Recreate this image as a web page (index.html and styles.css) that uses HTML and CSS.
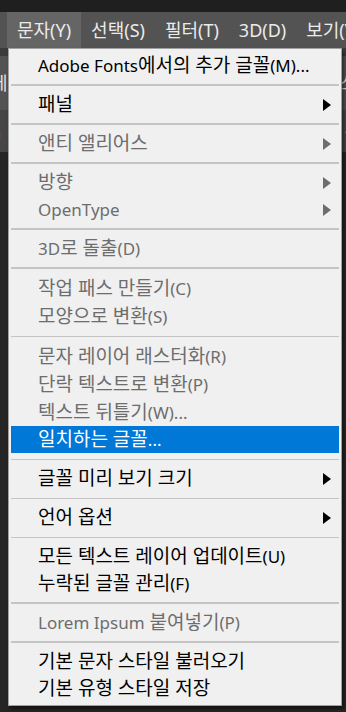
FILE: index.html
```html
<!DOCTYPE html>
<html>
<head>
<meta charset="UTF-8">
<title>문자 메뉴</title>
<link rel="stylesheet" href="styles.css">
</head>
<body>
<div class="top_strip"></div>
<div class="menubar">
	<span class="mb_item active">문자(Y)</span>
	<span class="mb_item">선택(S)</span>
	<span class="mb_item">필터(T)</span>
	<span class="mb_item">3D(D)</span>
	<span class="mb_item">보기(V)</span>
</div>
<div class="work">
	<div class="gap_row"></div>
	<div class="opt_bar">
		<span class="cut_left">데</span>
		<span class="cut_right">스</span>
	</div>
	<div class="tab_bar">
		<span class="cut_left">a</span>
		<span class="cut_right">^</span>
	</div>
</div>

<div class="menu">
	<div class="item"><span><i>Adobe Fonts</i>에서의 추가 글꼴<i>(M)...</i></span></div>
	<div class="sep"></div>
	<div class="item"><span>패널</span><b class="arrow"></b></div>
	<div class="sep"></div>
	<div class="item off"><span>앤티 앨리어스</span><b class="arrow"></b></div>
	<div class="sep"></div>
	<div class="item off"><span>방향</span><b class="arrow"></b></div>
	<div class="item off"><span><i>OpenType</i></span><b class="arrow"></b></div>
	<div class="sep"></div>
	<div class="item off"><span><i>3D</i>로 돌출<i>(D)</i></span></div>
	<div class="sep"></div>
	<div class="item off tall"><span>작업 패스 만들기<i>(C)</i></span></div>
	<div class="item off tall"><span>모양으로 변환<i>(S)</i></span></div>
	<div class="sep thin"></div>
	<div class="item off tall"><span>문자 레이어 래스터화<i>(R)</i></span></div>
	<div class="item off tall"><span>단락 텍스트로 변환<i>(P)</i></span></div>
	<div class="item off tall"><span>텍스트 뒤틀기<i>(W)...</i></span></div>
	<div class="item hover"><span>일치하는 글꼴<i>...</i></span></div>
	<div class="sep thin"></div>
	<div class="item"><span>글꼴 미리 보기 크기</span><b class="arrow"></b></div>
	<div class="sep thin"></div>
	<div class="item"><span>언어 옵션</span><b class="arrow"></b></div>
	<div class="sep thin"></div>
	<div class="item"><span>모든 텍스트 레이어 업데이트<i>(U)</i></span></div>
	<div class="item"><span>누락된 글꼴 관리<i>(F)</i></span></div>
	<div class="sep"></div>
	<div class="item off"><span><i>Lorem Ipsum</i> 붙여넣기<i>(P)</i></span></div>
	<div class="sep"></div>
	<div class="item"><span>기본 문자 스타일 불러오기</span></div>
	<div class="item"><span>기본 유형 스타일 저장</span></div>
</div>
</body>
</html>
```

FILE: styles.css
```css
*{
	margin:0;
	padding:0;
	box-sizing:border-box;
}
body{
	width:346px;
	height:712px;
	overflow:hidden;
	position:relative;
	background-color:#262626;
	font-family:"Noto Sans","Noto Sans CJK KR",sans-serif;
}
.top_strip{
	height:12px;
	background-color:#1f1f1f;
}
.menubar{
	height:36px;
	background-color:#535353;
	display:flex;
	padding-left:7px;
	white-space:nowrap;
}
.mb_item{
	padding:0 10px;
	line-height:36px;
	font-size:18px;
	color:#ebebeb;
}
.mb_item.active{
	background-color:#656565;
}
.gap_row{
	height:8px;
	background-color:#3c3c3c;
}
.opt_bar,
.tab_bar{
	display:flex;
	justify-content:space-between;
	overflow:hidden;
	color:#e0e0e0;
	font-size:18px;
}
.opt_bar{
	height:54px;
	line-height:54px;
	background-color:#535353;
}
.tab_bar{
	height:42px;
	line-height:42px;
	background-color:#464646;
	color:#cfcfcf;
}
.cut_left{
	margin-left:-9px;
}
.cut_right{
	margin-right:-9px;
}

.menu{
	position:absolute;
	top:48px;
	left:8px;
	width:334px;
	padding:3px 2px 3px 2px;
	background-color:#f0f0f0;
	border:1px solid #a0a0a0;
	box-shadow:2px 3px 4px rgba(0,0,0,0.55);
}
.item{
	height:27px;
	line-height:27px;
	padding-left:27px;
	padding-right:8px;
	font-size:19px;
	color:#000;
	display:flex;
	justify-content:space-between;
	align-items:center;
	white-space:nowrap;
}
.item.tall{
	height:28px;
	line-height:28px;
}
.item i{
	font-style:normal;
	font-size:17px;
}
.item.off{
	color:#6d6d6d;
}
.item.hover{
	background-color:#0078d7;
	color:#fff;
}
.arrow{
	width:0;
	height:0;
	border-top:6px solid transparent;
	border-bottom:6px solid transparent;
	border-left:8px solid #000;
}
.item.off .arrow{
	border-left-color:#6d6d6d;
}
.sep{
	height:12px;
	padding:5px 0;
}
.sep::after{
	content:"";
	display:block;
	height:2px;
	background-color:#c4c4c4;
}
.sep.thin{
	padding:6px 0 5px;
}
.sep.thin::after{
	height:1px;
}
```
